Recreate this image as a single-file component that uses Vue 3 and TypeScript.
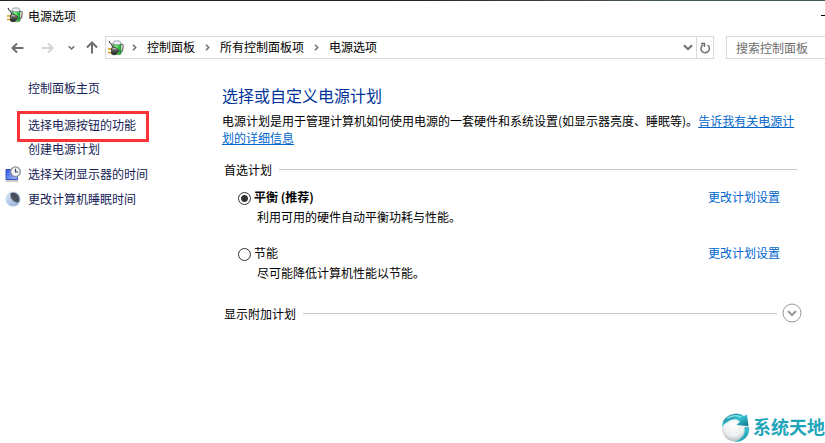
<script setup lang="ts">
import { ref } from 'vue'

interface Task {
  label: string
  icon?: 'display' | 'sleep'
  marked?: boolean
}

interface Plan {
  id: string
  name: string
  description: string
}

const crumbs: string[] = ['控制面板', '所有控制面板项', '电源选项']

const tasks: Task[] = [
  { label: '选择电源按钮的功能', marked: true },
  { label: '创建电源计划' },
  { label: '选择关闭显示器的时间', icon: 'display' },
  { label: '更改计算机睡眠时间', icon: 'sleep' },
]

const plans: Plan[] = [
  { id: 'balanced', name: '平衡 (推荐)', description: '利用可用的硬件自动平衡功耗与性能。' },
  { id: 'saver', name: '节能', description: '尽可能降低计算机性能以节能。' },
]

const selected = ref<string>('balanced')
const search = ref<string>('')
</script>

<template>
  <div class="window">
    <svg class="defs" aria-hidden="true">
      <defs>
        <linearGradient id="cell" x1="0" x2="1">
          <stop offset="0" stop-color="#2db53f" />
          <stop offset="0.4" stop-color="#7df07c" />
          <stop offset="1" stop-color="#109a2b" />
        </linearGradient>
        <linearGradient id="plug" x1="0" y1="0" x2="0" y2="1">
          <stop offset="0" stop-color="#8d8d8d" />
          <stop offset="1" stop-color="#1c1c1c" />
        </linearGradient>
        <linearGradient id="screen" x1="0" y1="0" x2="1" y2="1">
          <stop offset="0" stop-color="#2f55e8" />
          <stop offset="1" stop-color="#9dbcff" />
        </linearGradient>
        <linearGradient id="moon" x1="0" y1="0" x2="1" y2="1">
          <stop offset="0" stop-color="#dfeafa" />
          <stop offset="1" stop-color="#8ba9cf" />
        </linearGradient>
        <linearGradient id="shade" x1="0" y1="1" x2="1" y2="0">
          <stop offset="0" stop-color="#6d8099" />
          <stop offset="0.5" stop-color="#464c56" />
          <stop offset="1" stop-color="#5b626c" />
        </linearGradient>
        <radialGradient id="globe" cx="0.45" cy="0.4" r="0.65">
          <stop offset="0" stop-color="#ffffff" />
          <stop offset="0.6" stop-color="#eceeef" />
          <stop offset="1" stop-color="#a3acaf" />
        </radialGradient>
        <linearGradient id="swoosh" x1="0" y1="0" x2="1" y2="1">
          <stop offset="0" stop-color="#0c5e70" />
          <stop offset="0.5" stop-color="#37c3d4" />
          <stop offset="1" stop-color="#0b6f80" />
        </linearGradient>
        <symbol id="power" viewBox="0 0 16 16">
          <path d="M12.500 4.500h1.500q1.500 0 1.200 2l-.7 4q-.5 1.500-2 1.500" fill="none" stroke="#666" stroke-width="1.200" />
          <path d="M5 3h8v11q-3.500 1.700-7 0z" fill="url(#cell)" stroke="#3d7a47" stroke-width=".6" />
          <ellipse cx="9" cy="2.800" rx="4" ry="2" fill="#eef1f8" stroke="#8a90a6" stroke-width=".8" />
          <path d="M7.500 .5h3v1.200h-3z" fill="#c3c9d8" />
          <path d="M1.200 1q.3 2.500 2 3 1.300 1 1.300 3.500" fill="none" stroke="#444" stroke-width="1.200" />
          <path d="M0 9h4M0 12.500h4" stroke="#d39a12" stroke-width="1.600" />
          <path d="M3.500 8q2-1.500 4.500-.2l2.500 1.700q1 1.200 0 2.500L8 14.200q-2.500 1.300-4.500-.2z" fill="url(#plug)" stroke="#222" stroke-width=".6" />
          <path d="M4.500 9q1.500-1 3.500 0" fill="none" stroke="#d0d0d0" stroke-width=".9" />
        </symbol>
      </defs>
    </svg>

    <header class="titlebar">
      <svg class="app-icon"><use href="#power" /></svg>
      <h1>电源选项</h1>
      <button class="minimize" type="button" aria-label="最小化"></button>
    </header>

    <nav class="toolbar" aria-label="导航">
      <button class="nav back" type="button" aria-label="后退">
        <svg width="13" height="12" viewBox="0 0 13 12"><path d="M12.500 6H1.500M6 1.500L1.500 6 6 10.500" /></svg>
      </button>
      <button class="nav forward" type="button" aria-label="前进" disabled>
        <svg width="13" height="12" viewBox="0 0 13 12"><path d="M.5 6h11M7 1.500L11.500 6 7 10.500" /></svg>
      </button>
      <button class="nav recent" type="button" aria-label="最近">
        <svg width="7" height="6" viewBox="0 0 7 6"><path d="M.7 1.200l2.800 2.800 2.800-2.800" /></svg>
      </button>
      <button class="nav up" type="button" aria-label="上移">
        <svg width="12" height="13" viewBox="0 0 12 13"><path d="M6 12.500V1.500M1 6.500l5-5 5 5" /></svg>
      </button>
      <div class="address">
        <svg class="app-icon"><use href="#power" /></svg>
        <template v-for="crumb in crumbs" :key="crumb">
          <svg class="chevron" width="5" height="7" viewBox="0 0 5 7"><path d="M1 .8l2.700 2.700L1 6.200" /></svg>
          <a class="crumb" href="#">{{ crumb }}</a>
        </template>
        <button class="drop" type="button" aria-label="历史记录">
          <svg width="10" height="7" viewBox="0 0 10 7"><path d="M1 1.200l4 4 4-4" /></svg>
        </button>
        <button class="refresh" type="button" aria-label="刷新">
          <svg width="11" height="12" viewBox="0 0 11 12">
            <path d="M7.600 3A4.200 4.200 0 1 1 3 2.900" />
            <path d="M1 1.500h3.500V5" />
          </svg>
        </button>
      </div>
      <input v-model="search" class="search" type="text" placeholder="搜索控制面板" aria-label="搜索控制面板" />
    </nav>

    <div class="body">
      <aside class="sidebar">
        <a class="home" href="#">控制面板主页</a>
        <ul class="tasks">
          <li v-for="task in tasks" :key="task.label" :class="{ marked: task.marked }">
            <svg v-if="task.icon === 'display'" class="task-icon" viewBox="0 0 16 16">
              <path d="M1 3.500h11.500v10H1z" fill="url(#screen)" stroke="#3a50b8" />
              <path d="M.5 15h13" stroke="#9a9a9a" />
              <circle cx="10.500" cy="5.700" r="4.800" fill="#f6f7f8" stroke="#8b9098" stroke-width="1.300" />
              <path d="M10.500 2.800v3.200h2.700" fill="none" stroke="#34404e" stroke-width="1.200" />
            </svg>
            <svg v-else-if="task.icon === 'sleep'" class="task-icon" viewBox="0 0 16 16">
              <circle cx="8" cy="8" r="7.500" fill="url(#moon)" />
              <path d="M5.500 2.200Q8 .8 11 2.300 14.800 4.500 14.200 9.500 13.500 12 11.500 11.500 4.500 9.500 5.500 2.200z" fill="url(#shade)" />
            </svg>
            <a href="#">{{ task.label }}</a>
          </li>
        </ul>
      </aside>

      <main class="content">
        <h2>选择或自定义电源计划</h2>
        <p class="intro">电源计划是用于管理计算机如何使用电源的一套硬件和系统设置(如显示器亮度、睡眠等)。<a href="#">告诉我有关电源计划的详细信息</a></p>

        <fieldset class="plans">
          <legend class="group"><span>首选计划</span></legend>
          <div v-for="plan in plans" :key="plan.id" class="plan">
            <input :id="plan.id" v-model="selected" type="radio" name="plan" :value="plan.id" />
            <div class="plan-text">
              <label :for="plan.id" :class="{ active: selected === plan.id }">{{ plan.name }}</label>
              <p>{{ plan.description }}</p>
            </div>
            <a class="change" href="#">更改计划设置</a>
          </div>
        </fieldset>

        <div class="group more">
          <span id="more-label">显示附加计划</span>
          <button type="button" aria-labelledby="more-label">
            <svg width="20" height="20" viewBox="0 0 20 20">
              <circle cx="10" cy="10" r="9" />
              <path d="M6 8l4 4 4-4" />
            </svg>
          </button>
        </div>
      </main>
    </div>

    <div class="brand">
      <svg width="32" height="31" viewBox="0 0 32 31">
        <circle cx="14" cy="16.500" r="13" fill="url(#globe)" />
        <path d="M1 15Q1.500 6 9 3q8-3.500 14 1l3-1.500 1.500 11.500-12-1 3.500-3.500Q14 5.500 8 9 3 11.500 1 15z" fill="url(#swoosh)" />
        <path d="M6 6.500q6-4.500 14-1.500" fill="none" stroke="#86e3ec" stroke-width="1.500" />
        <path d="M28 15q1 7-4 11.500-5 4-11 3.500 8-3 10-8 1-3 .5-6.500z" fill="url(#swoosh)" />
      </svg>
      <span>系统天地</span>
    </div>
  </div>
</template>

<style>
body {
  background: #fff;
}
</style>

<style scoped>
.window {
  position: relative;
  min-height: 100vh;
  box-sizing: border-box;
  overflow: hidden;
  font: 12px/17px "Noto Sans CJK SC", sans-serif;
  color: #000;
  background: #fff;
}
.window::before {
  content: "";
  display: block;
  height: 1px;
  background: linear-gradient(90deg, #2b2023, #2c2226 50%, #45594a 80%);
}
.defs {
  position: absolute;
  width: 0;
  height: 0;
}
h1, h2, p, ul {
  margin: 0;
  padding: 0;
  font-weight: 400;
}
a {
  color: inherit;
  text-decoration: none;
}
button {
  display: flex;
  align-items: center;
  justify-content: center;
  padding: 0;
  border: 0;
  background: none;
}
button svg,
.chevron {
  fill: none;
  stroke: #6e6e6e;
  stroke-width: 2;
}
.app-icon {
  width: 16px;
  height: 16px;
  flex: none;
}
.titlebar {
  display: flex;
  align-items: center;
  height: 28px;
  padding-left: 7px;
  gap: 5px;
}
h1 {
  font-size: 12px;
  line-height: 17px;
}
.minimize {
  width: 4px;
  height: 1px;
  margin-left: auto;
  background: #000;
}
.toolbar {
  display: flex;
  align-items: center;
  height: 23px;
  padding: 7px 0 0 11px;
}
.nav {
  width: 13px;
  height: 21px;
}
.nav svg {
  flex: none;
}
.forward {
  margin-left: 17px;
}
.forward svg {
  stroke: #d4d4d4;
}
.recent {
  margin-left: 11px;
}
.recent svg {
  stroke-width: 1.5;
}
.up {
  margin-left: 7px;
}
.address {
  display: flex;
  align-items: center;
  flex: 1;
  box-sizing: border-box;
  height: 23px;
  margin-left: 7px;
  padding-left: 2px;
  border: 1px solid #d9d9d9;
}
.chevron {
  flex: none;
  margin: 0 10px;
  stroke-width: 1.5;
}
.app-icon + .chevron {
  margin-left: 8px;
}
.crumb,
.search {
  padding-bottom: 2px;
}
.drop {
  width: 17px;
  height: 21px;
  margin-left: auto;
}
.refresh {
  width: 17px;
  height: 21px;
  border-left: 1px solid #d9d9d9;
}
.refresh svg {
  stroke-width: 1.5;
}
.search {
  box-sizing: border-box;
  width: 99px;
  height: 23px;
  margin-left: 12px;
  padding: 0 0 0 9px;
  border: 1px solid #d9d9d9;
  border-right: 0;
  border-radius: 0;
  font: inherit;
}
.search::placeholder {
  color: #6d6d6d;
  opacity: 1;
}
.body {
  display: flex;
}
.sidebar {
  flex: none;
  width: 222px;
  padding-top: 20px;
  color: #151c55;
}
.home {
  display: block;
  margin-left: 28px;
}
.tasks {
  margin-top: 15px;
  list-style: none;
}
.tasks li {
  display: flex;
  align-items: center;
  height: 25px;
  padding-left: 28px;
}
.tasks .marked {
  box-sizing: border-box;
  width: 132px;
  height: 31px;
  margin: 0 0 -6px 17px;
  padding: 0 0 5px 8px;
  border: 3px solid #fb3338;
}
.task-icon {
  width: 16px;
  height: 16px;
  margin: 0 7px 0 -23px;
}
.content {
  flex: 1;
  min-width: 0;
  padding: 25px 23px 0 0;
}
h2 {
  font-size: 16px;
  line-height: 22px;
  color: #003399;
}
.intro {
  margin: 6px 5px 0 0;
}
.intro a {
  color: #0066cc;
  text-decoration: underline;
}
.plans {
  margin: 15px 5px 0 0;
  padding: 0;
  border: 0;
}
.group {
  display: flex;
  align-items: center;
  box-sizing: border-box;
  width: 100%;
  padding: 0 0 0 2px;
}
.group span {
  flex: none;
}
.group::after {
  content: "";
  order: 1;
  flex: 1;
  height: 1px;
  margin-left: 7px;
  background: #c8c8c8;
}
.plan {
  display: flex;
  align-items: flex-start;
  padding: 10px 17px 9px 16px;
}
.plan input {
  appearance: none;
  box-sizing: border-box;
  width: 13px;
  height: 13px;
  margin: 4px 3px 0 0;
  border: 1px solid #333;
  border-radius: 50%;
  background: #fff;
}
.plan input:checked {
  background: radial-gradient(circle, #333 3px, #fff 4px);
}
.plan-text {
  flex: 1;
}
.plan-text label {
  display: block;
}
.plan-text .active {
  font-weight: 700;
}
.plan-text p {
  margin: 3px 0 0 3px;
}
.change {
  color: #0066cc;
}
.more {
  margin-top: 13px;
}
.more button {
  order: 2;
  margin-left: 5px;
}
.more button svg {
  stroke: #999;
  stroke-width: 1;
}
.more button path {
  stroke-width: 2;
}
.brand {
  position: absolute;
  right: 0;
  bottom: 0;
  display: flex;
  align-items: center;
  color: #1fa5b8;
  font-size: 18px;
  line-height: 24px;
  font-weight: 700;
}
.brand span {
  padding-bottom: 4px;
}
</style>
